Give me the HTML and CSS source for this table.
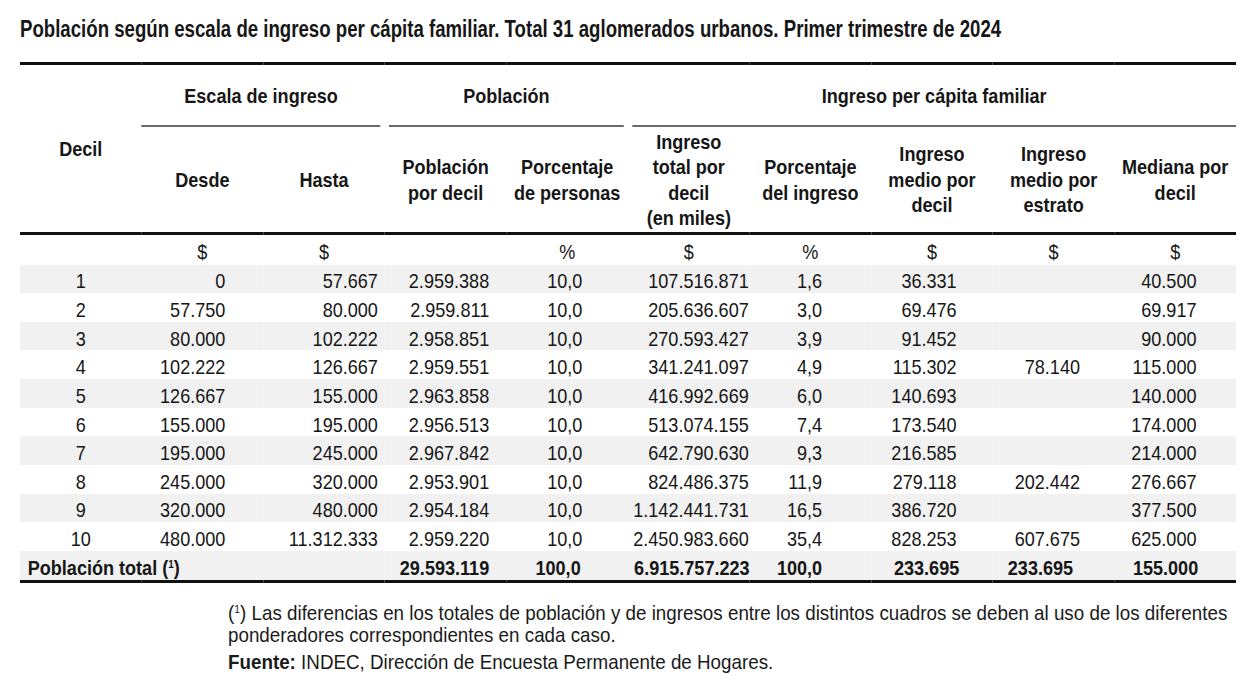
FILE: index.html
```html
<!DOCTYPE html>
<html lang="es">
<head>
<meta charset="utf-8">
<title>Población según escala de ingreso per cápita familiar</title>
<link rel="stylesheet" href="styles.css">
</head>
<body>
<main class="page">
  <div class="title-wrap">
    <h1 class="title">Población según escala de ingreso per cápita familiar. Total 31 aglomerados urbanos. Primer trimestre de 2024</h1>
  </div>
  <div class="table-wrap">
    <table class="data">
      <colgroup>
        <col><col><col><col><col><col><col><col><col><col>
      </colgroup>
      <thead>
        <tr class="groups">
          <th rowspan="2" class="decil-h">Decil</th>
          <th colspan="2" class="grp grp-first"><div class="grp-label">Escala de ingreso</div></th>
          <th colspan="2" class="grp grp-mid"><div class="grp-label">Población</div></th>
          <th colspan="5" class="grp grp-last"><div class="grp-label">Ingreso per cápita familiar</div></th>
        </tr>
        <tr class="subs">
          <th>Desde</th>
          <th>Hasta</th>
          <th>Población<br>por decil</th>
          <th>Porcentaje<br>de personas</th>
          <th>Ingreso<br>total por<br>decil<br>(en miles)</th>
          <th>Porcentaje<br>del ingreso</th>
          <th>Ingreso<br>medio por<br>decil</th>
          <th>Ingreso<br>medio por<br>estrato</th>
          <th>Mediana por<br>decil</th>
        </tr>
      </thead>
      <tbody>
        <tr class="units">
          <td></td><td>$</td><td>$</td><td></td><td>%</td><td>$</td><td>%</td><td>$</td><td>$</td><td>$</td>
        </tr>
        <tr><td>1</td><td>0</td><td>57.667</td><td>2.959.388</td><td>10,0</td><td>107.516.871</td><td>1,6</td><td>36.331</td><td></td><td>40.500</td></tr>
        <tr><td>2</td><td>57.750</td><td>80.000</td><td>2.959.811</td><td>10,0</td><td>205.636.607</td><td>3,0</td><td>69.476</td><td></td><td>69.917</td></tr>
        <tr><td>3</td><td>80.000</td><td>102.222</td><td>2.958.851</td><td>10,0</td><td>270.593.427</td><td>3,9</td><td>91.452</td><td></td><td>90.000</td></tr>
        <tr><td>4</td><td>102.222</td><td>126.667</td><td>2.959.551</td><td>10,0</td><td>341.241.097</td><td>4,9</td><td>115.302</td><td>78.140</td><td>115.000</td></tr>
        <tr><td>5</td><td>126.667</td><td>155.000</td><td>2.963.858</td><td>10,0</td><td>416.992.669</td><td>6,0</td><td>140.693</td><td></td><td>140.000</td></tr>
        <tr><td>6</td><td>155.000</td><td>195.000</td><td>2.956.513</td><td>10,0</td><td>513.074.155</td><td>7,4</td><td>173.540</td><td></td><td>174.000</td></tr>
        <tr><td>7</td><td>195.000</td><td>245.000</td><td>2.967.842</td><td>10,0</td><td>642.790.630</td><td>9,3</td><td>216.585</td><td></td><td>214.000</td></tr>
        <tr><td>8</td><td>245.000</td><td>320.000</td><td>2.953.901</td><td>10,0</td><td>824.486.375</td><td>11,9</td><td>279.118</td><td>202.442</td><td>276.667</td></tr>
        <tr><td>9</td><td>320.000</td><td>480.000</td><td>2.954.184</td><td>10,0</td><td>1.142.441.731</td><td>16,5</td><td>386.720</td><td></td><td>377.500</td></tr>
        <tr><td>10</td><td>480.000</td><td>11.312.333</td><td>2.959.220</td><td>10,0</td><td>2.450.983.660</td><td>35,4</td><td>828.253</td><td>607.675</td><td>625.000</td></tr>
        <tr class="total"><td colspan="3" class="total-label">Población total (<sup>1</sup>)</td><td>29.593.119</td><td>100,0</td><td>6.915.757.223</td><td>100,0</td><td>233.695</td><td>233.695</td><td>155.000</td></tr>
      </tbody>
    </table>
  </div>
  <div class="notes">
    <p class="note">(<sup>1</sup>) Las diferencias en los totales de población y de ingresos entre los distintos cuadros se deben al uso de los diferentes<br>ponderadores correspondientes en cada caso.</p>
    <p class="source"><strong>Fuente:</strong> INDEC, Dirección de Encuesta Permanente de Hogares.</p>
  </div>
</main>
</body>
</html>
```

FILE: styles.css
```css
html, body {
  margin: 0;
  padding: 0;
  background: #ffffff;
}

body {
  font-family: "Liberation Sans", Arial, sans-serif;
  color: #161616;
}

.page {
  padding: 15px 0 0 20px;
}

/* The original uses a condensed grotesque; Liberation Sans is narrowed horizontally. */
.title-wrap {
  width: 1300px;
  transform: scaleX(0.81);
  transform-origin: 0 0;
  margin-bottom: 19px;
}

.title {
  margin: 0;
  font-size: 23px;
  line-height: 28px;
  font-weight: 700;
  white-space: nowrap;
}

.table-wrap {
  width: 1414px;
  transform: scaleX(0.86);
  transform-origin: 0 0;
}

.data {
  width: 1414px;
  table-layout: fixed;
  border-collapse: collapse;
  border-top: 3px solid #111;
  border-bottom: 3px solid #111;
  font-size: 21px;
}

.data col {
  width: 141.4px;
}

.data th {
  font-weight: 700;
  font-size: 21px;
  line-height: 25.5px;
  text-align: center;
  vertical-align: middle;
  padding: 0;
}

.groups th.grp {
  height: 62px;
  padding: 0;
  vertical-align: bottom;
}

.grp-label {
  height: 60px;
  line-height: 62px;
  border-bottom: 2px solid #6a6a6a;
}

.grp-first .grp-label { margin: 0 5px 0 0; }
.grp-mid .grp-label { margin: 0 5px; }
.grp-last .grp-label { margin: 0 0 0 5px; }

.subs th {
  height: 105px;
  border-bottom: 3px solid #111;
}

.decil-h {
  border-bottom: 3px solid #111;
}

.data td {
  padding: 0;
  height: 28.65px;
  line-height: 23px;
  padding-top: 4px;
  box-sizing: border-box;
  text-align: right;
  white-space: nowrap;
}

.data tbody tr:nth-child(even) td {
  background: #f1f1f1;
}

.data td:nth-child(1) { text-align: center; }
.data td:nth-child(2) { padding-right: 44px; }
.data td:nth-child(3) { padding-right: 8px; }
.data td:nth-child(4) { padding-right: 20px; }
.data td:nth-child(5) { padding-right: 53px; }
.data td:nth-child(6) { padding-right: 1px; }
.data td:nth-child(7) { padding-right: 57px; }
.data td:nth-child(8) { padding-right: 42px; }
.data td:nth-child(9) { padding-right: 40px; }
.data td:nth-child(10) { padding-right: 46px; }

.data tr.units td {
  height: 31px;
  padding-top: 3px;
  text-align: center;
  padding-right: 0;
}

.data tr.total td {
  font-weight: 700;
  height: 31px;
  padding-top: 3px;
}

.data tr.total td.total-label {
  text-align: left;
  padding-left: 9px;
  padding-right: 0;
}

.data .total td:nth-child(2) { padding-right: 20px; }
.data .total td:nth-child(3) { padding-right: 55px; }
.data .total td:nth-child(4) { padding-right: 0; }
.data .total td:nth-child(5) { padding-right: 57px; }
.data .total td:nth-child(6) { padding-right: 39px; }
.data .total td:nth-child(7) { padding-right: 48px; }
.data .total td:nth-child(8) { padding-right: 44px; }

sup {
  font-size: 0.55em;
  line-height: 0;
  vertical-align: 0.6em;
}

.notes {
  width: 1150px;
  margin: 19px 0 0 208px;
  transform: scaleX(0.895);
  transform-origin: 0 0;
  font-size: 21px;
  line-height: 22px;
  color: #1a1a1a;
  white-space: nowrap;
}

.note {
  margin: 0;
}

.source {
  margin: 5px 0 0 0;
}

.source strong {
  font-weight: 700;
}
```
